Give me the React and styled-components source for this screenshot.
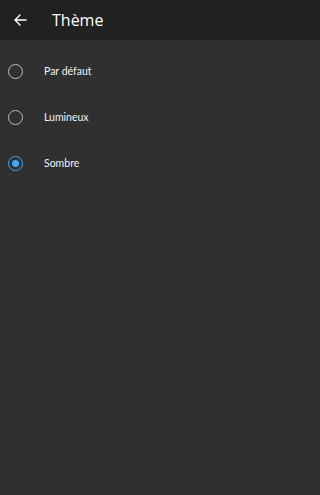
import React from "react";
import styled, { createGlobalStyle } from "styled-components";

const Global = createGlobalStyle`
  html, body { margin: 0; padding: 0; background: #303030; }
  body { font-family: Lato, "Noto Sans", sans-serif; }
`;

const Page = styled.div`
  width: 100%;
  min-height: 100vh;
  background: #303030;
  display: flex;
  flex-direction: column;
`;

const Toolbar = styled.div`
  height: 40px;
  background: #212121;
  display: flex;
  align-items: center;
  padding-left: 13px;
  gap: 25px;
  box-sizing: border-box;
`;

const BackButton = styled.button`
  background: none;
  border: 0;
  padding: 0;
  width: 14px;
  height: 14px;
  display: flex;
  align-items: center;
  justify-content: center;
  color: #fff;
`;

const Title = styled.h1`
  margin: 0;
  font-family: "Open Sans", Lato, sans-serif;
  font-size: 16px;
  font-weight: 500;
  color: #fff;
`;

const List = styled.div`
  display: flex;
  flex-direction: column;
  padding-top: 8px;
`;

const Row = styled.label`
  height: 46px;
  display: flex;
  align-items: center;
  padding-left: 8px;
  gap: 21px;
  cursor: pointer;
`;

const Radio = styled.span`
  width: 15px;
  height: 15px;
  box-sizing: border-box;
  border-radius: 50%;
  border: 1.8px solid ${(p) => (p.$checked ? "#42a5f5" : "#bdbdbd")};
  display: flex;
  align-items: center;
  justify-content: center;
  &::after {
    content: "";
    width: 7px;
    height: 7px;
    border-radius: 50%;
    background: ${(p) => (p.$checked ? "#42a5f5" : "transparent")};
  }
`;

const Label = styled.span`
  font-size: 10.5px;
  color: #f2f2f2;
`;

const options = ["Par défaut", "Lumineux", "Sombre"];

export default function App() {
  const selected = "Sombre";
  return (
    <Page>
      <Global />
      <Toolbar>
        <BackButton aria-label="Retour">
          <svg width="13" height="12" viewBox="0 0 13 12" fill="none" stroke="#fff" strokeWidth="1.4" strokeLinecap="round" strokeLinejoin="round">
            <path d="M12 6H1.5M6 1L1 6l5 5" />
          </svg>
        </BackButton>
        <Title>Thème</Title>
      </Toolbar>
      <List>
        {options.map((o) => (
          <Row key={o}>
            <Radio $checked={o === selected} />
            <Label>{o}</Label>
          </Row>
        ))}
      </List>
    </Page>
  );
}
